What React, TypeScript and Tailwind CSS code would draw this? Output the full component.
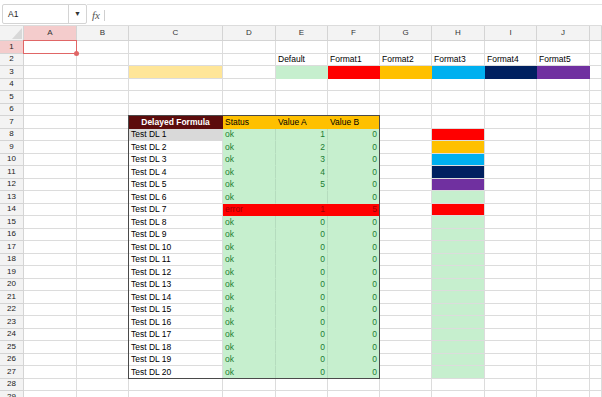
import React from 'react';

// column widths in px: row header, A..J, then K takes the rest
const COLS = ['A', 'B', 'C', 'D', 'E', 'F', 'G', 'H', 'I', 'J', 'K'];
const ROW_COUNT = 29;

const FORMAT_BG = ['bg-[#ff0000]', 'bg-[#ffc000]', 'bg-[#00b0f0]', 'bg-[#002060]', 'bg-[#7030a0]'];

const BASE = 'flex items-center overflow-hidden whitespace-nowrap px-[2px] border-r border-b text-[8.5px] leading-none';

type Cell = { text?: string; cls: string };

const plain = (text = ''): Cell => ({ text, cls: 'border-[#dcdcdc] bg-white text-black' });

function getCell(r: number, c: number): Cell {
  const col = COLS[c];

  if (r === 2) {
    if (col === 'E') return plain('Default');
    if (['F', 'G', 'H', 'I', 'J'].includes(col)) return plain('Format' + (c - 4));
  }

  if (r === 3) {
    if (col === 'C') return { cls: 'border-[#dcdcdc] bg-[#ffe699]' };
    if (col === 'E') return { cls: 'border-[#c6efce] bg-[#c6efce]' };
    if (col === 'F') return { cls: 'border-[#ff0000] bg-[#ff0000]' };
    if (col === 'G') return { cls: 'border-[#ffc000] bg-[#ffc000]' };
    if (col === 'H') return { cls: 'border-[#00b0f0] bg-[#00b0f0]' };
    if (col === 'I') return { cls: 'border-[#002060] bg-[#002060]' };
    if (col === 'J') return { cls: 'border-[#7030a0] bg-[#7030a0]' };
  }

  if (r === 7) {
    if (col === 'C') return { text: 'Delayed Formula', cls: 'border-[#5c0c0c] bg-[#5c0c0c] text-white font-bold justify-center' };
    if (col === 'D') return { text: 'Status', cls: 'border-[#ffc000] bg-[#ffc000] text-black' };
    if (col === 'E') return { text: 'Value A', cls: 'border-[#ffc000] bg-[#ffc000] text-black' };
    if (col === 'F') return { text: 'Value B', cls: 'border-[#ffc000] bg-[#ffc000] text-black' };
  }

  if (r >= 8 && r <= 27) {
    const n = r - 7;
    const isErr = n === 7;
    if (col === 'C') {
      return { text: 'Test DL ' + n, cls: n === 1 ? 'border-[#d9d9d9] bg-[#d9d9d9] text-black' : 'border-[#dcdcdc] bg-white text-black' };
    }
    if (col === 'D') {
      return isErr
        ? { text: 'error', cls: 'border-[#ff0000] bg-[#ff0000] text-[#9c0006]' }
        : { text: 'ok', cls: 'border-b-[#c6efce] border-r-[#b5dcbe] bg-[#c6efce] text-[#1b7d31]' };
    }
    if (col === 'E') {
      const v = n <= 5 ? String(n) : n === 6 ? '' : isErr ? '1' : '0';
      return isErr
        ? { text: v, cls: 'border-[#ff0000] bg-[#ff0000] text-[#9c0006] justify-end' }
        : { text: v, cls: 'border-b-[#c6efce] border-r-[#b5dcbe] bg-[#c6efce] text-[#1b7d31] justify-end' };
    }
    if (col === 'F') {
      return isErr
        ? { text: '5', cls: 'border-[#ff0000] bg-[#ff0000] text-[#9c0006] justify-end' }
        : { text: '0', cls: 'border-[#c6efce] bg-[#c6efce] text-[#1b7d31] justify-end' };
    }
    if (col === 'H') {
      if (n <= 5) return { cls: 'border-r-[#dcdcdc] border-b-[#dcdcdc] ' + FORMAT_BG[n - 1] };
      if (isErr) return { cls: 'border-[#dcdcdc] bg-[#ff0000]' };
      return { cls: 'border-[#dcdcdc] bg-[#c6efce]' };
    }
  }

  return plain();
}

const App: React.FC = () => {
  const rows = Array.from({ length: ROW_COUNT }, (_, i) => i + 1);

  return (
    <div className="w-screen h-screen overflow-hidden bg-white font-['Liberation_Sans',Arial,sans-serif] text-black">
      {/* name box + formula bar */}
      <div className="h-[25px] flex items-stretch">
        <div className="mt-[4px] mb-[1px] ml-[2px] w-[85px] flex border border-[#d4d4d4] rounded-[2px]">
          <div className="flex-1 flex items-center pl-[5px] text-[8.5px] text-[#222]">A1</div>
          <div className="w-[18px] flex items-center justify-center border-l border-[#d4d4d4] text-[7px] text-[#333]">▼</div>
        </div>
        <div className="flex-1 flex items-center mt-[4px] border-t border-[#e2e2e2]">
          <span className="ml-[5px] font-['Liberation_Serif',serif] italic text-[11px] text-[#555]">fx</span>
          <span className="ml-[4px] w-px h-[11px] bg-[#cfcfcf]" />
        </div>
      </div>

      {/* sheet */}
      <div className="grid grid-cols-[24px_53px_52px_94px_53px_52px_52px_52px_53px_52px_53px_1fr] grid-rows-[15px_repeat(29,12.5px)] border-t border-[#dcdcdc]">
        {/* corner */}
        <div className="bg-[#f3f3f3] border-r border-b border-[#d4d4d4] relative flex items-end justify-end" style={{ gridRow: 1, gridColumn: 1 }}>
          <svg width="10" height="11" viewBox="0 0 10 11" className="mb-[1px] mr-[1px]">
            <polygon points="10,0 10,11 0,11" fill="#d8d8d8" />
          </svg>
        </div>

        {COLS.map((col, c) => (
          <div
            key={'h' + col}
            className={
              'flex items-center justify-center border-r border-b border-[#d4d4d4] text-[8px] text-[#333] ' +
              (col === 'A' ? 'bg-[#f4cccc]' : 'bg-[#f3f3f3]')
            }
            style={{ gridRow: 1, gridColumn: c + 2 }}
          >
            {col === 'K' ? '' : col}
          </div>
        ))}

        {rows.map((r) => (
          <React.Fragment key={r}>
            <div
              className={
                'flex items-center justify-center border-r border-b border-[#d4d4d4] text-[8px] text-[#222] ' +
                (r === 1 ? 'bg-[#f4cccc]' : 'bg-[#f3f3f3]')
              }
              style={{ gridRow: r + 1, gridColumn: 1 }}
            >
              {r}
            </div>
            {COLS.map((col, c) => {
              const cell = getCell(r, c);
              return (
                <div key={col + r} className={BASE + ' ' + cell.cls} style={{ gridRow: r + 1, gridColumn: c + 2 }}>
                  {cell.text}
                </div>
              );
            })}
          </React.Fragment>
        ))}

        {/* selected cell A1 */}
        <div className="relative z-10 -mt-px -ml-px border-[1.5px] border-[#e06666] pointer-events-none" style={{ gridRow: 2, gridColumn: 2 }}>
          <span className="absolute -right-[3px] -bottom-[3px] w-[5px] h-[5px] rounded-full bg-[#e06666]" />
        </div>

        {/* table outline C7:F27 */}
        <div className="z-10 -mt-px -ml-px border-[1.5px] border-[#4a4a4a] pointer-events-none" style={{ gridRow: '8 / 29', gridColumn: '4 / 8' }} />
      </div>
    </div>
  );
};

export default App;
